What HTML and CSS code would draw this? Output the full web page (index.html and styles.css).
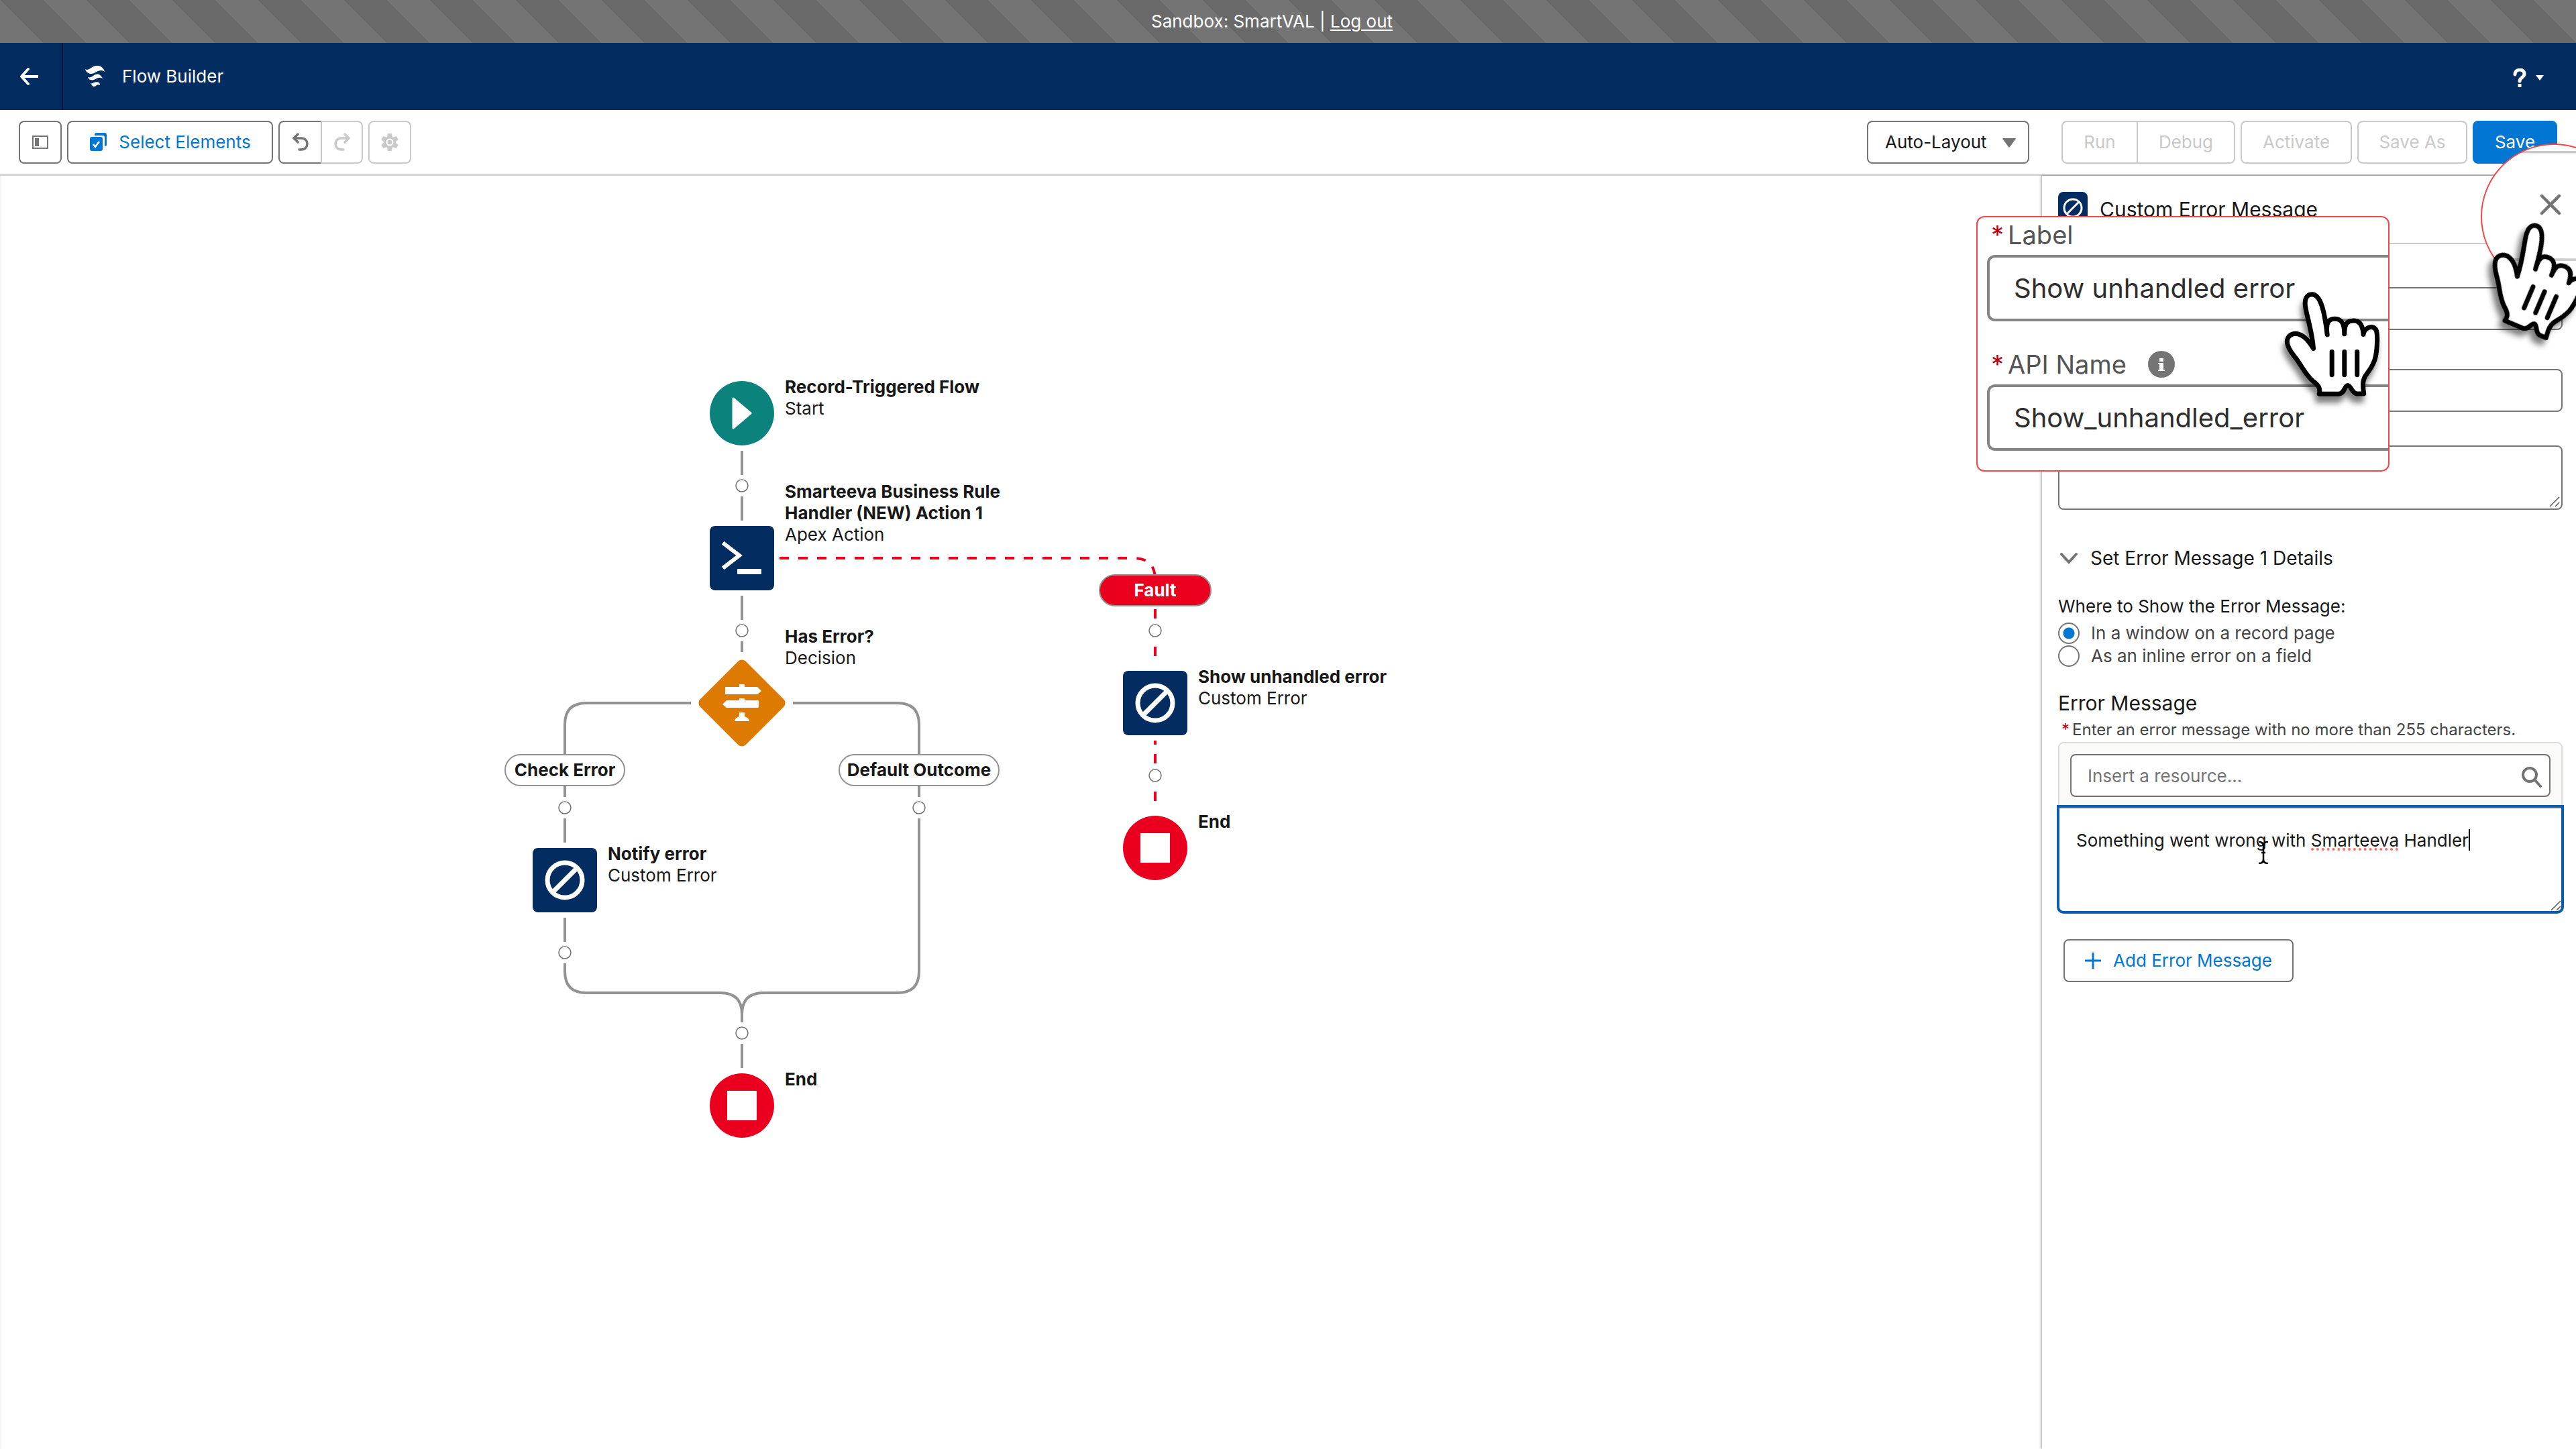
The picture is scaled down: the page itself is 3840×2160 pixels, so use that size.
FILE: index.html
```html
<!DOCTYPE html>
<html lang="en">
<head>
<meta charset="utf-8">
<title>Flow Builder</title>
<link rel="stylesheet" href="styles.css">
</head>
<body>
<div class="app">
  <div class="sandbox-bar"><span>Sandbox: SmartVAL | <a href="#logout">Log out</a></span></div>

  <header class="app-header">
    <button class="back" aria-label="Back">
      <svg width="32" height="28" viewBox="0 0 32 28" fill="none" stroke="#fff" stroke-width="4" stroke-linecap="round" stroke-linejoin="round"><path d="M14 3 4 14l10 11"/><path d="M4 14h25" stroke-linecap="butt"/></svg>
    </button>
    <div class="brand">
      <svg width="32" height="32" viewBox="0 0 32 32" fill="#fff"><path d="M1 5c2 2 5 1 9-2 6-4 11-4 14-2 3 2 5 4 6 8-4-3-8-2-12 0-5 3-9 4-12 2-3-1-4-3-5-6z"/><path d="M5 17c3 1 5 0 8-2 4-3 8-3 10-1 2 1 3 3 4 5-3-2-6-1-9 0-4 2-6 3-9 2-2 0-3-2-4-4z"/><path d="M9 26c2 1 3 0 5-1 3-1 5-1 8 0l1 4c-3-1-4-1-6 1s-5 1-6-1z"/></svg>
      <span>Flow Builder</span>
    </div>
    <button class="help" aria-label="Help">
      <svg width="20" height="28" viewBox="0 0 20 28" fill="none" stroke="#fff" stroke-width="5"><path d="M3 9c0-9 14-9 14-1 0 6-7 5-7 11" stroke-linecap="round"/><path d="M10 23v5"/></svg>
      <svg width="12" height="8" viewBox="0 0 12 8" fill="#fff"><path d="M0 0h12L6 8z"/></svg>
    </button>
  </header>

  <div class="toolbar">
    <button class="btn icon-btn" aria-label="Toggle toolbox">
      <svg width="24" height="20" viewBox="0 0 24 20"><path fill="none" stroke="#747474" stroke-width="2" d="M1 1h22v18H1z"/><path fill="#747474" d="M4 4h6v12H4z"/></svg>
    </button>
    <button class="btn select-btn">
      <svg width="28" height="28" viewBox="0 0 28 28"><path fill="#0176d3" d="M8 4V3c0-2 1-3 3-3h12c2 0 3 1 3 3v15c0 1-1 2-3 2V7c0-2-1-3-3-3z"/><rect x="1" y="6" width="19" height="21" rx="3" fill="#0176d3"/><path d="m6 17 3 4 6-8" fill="none" stroke="#fff" stroke-width="2.500"/></svg>
      <span>Select Elements</span>
    </button>
    <div class="btn-group">
      <button class="btn icon-btn" aria-label="Undo">
        <svg width="26" height="28" viewBox="0 0 26 28" fill="none" stroke="#747474" stroke-width="3.500" stroke-linecap="round"><path d="M9 2 3 8l6 6M3 8h11c12 0 12 17 0 17h-3"/></svg>
      </button>
      <button class="btn icon-btn" aria-label="Redo" disabled>
        <svg width="26" height="28" viewBox="0 0 26 28" fill="none" stroke="#c9c9c9" stroke-width="3.500" stroke-linecap="round"><path d="m17 2 6 6-6 6M23 8H12C0 8 0 25 12 25h3"/></svg>
      </button>
    </div>
    <button class="btn icon-btn" aria-label="Settings" disabled>
      <svg width="26" height="28" viewBox="-13 -14 26 28"><g fill="#c9c9c9"><circle r="9"/><path id="tooth" d="M-3-13h6l1 6h-8z"/><use href="#tooth" transform="rotate(60)"/><use href="#tooth" transform="rotate(120)"/><use href="#tooth" transform="rotate(180)"/><use href="#tooth" transform="rotate(240)"/><use href="#tooth" transform="rotate(300)"/></g><circle r="4.500" fill="#c9c9c9" stroke="#fff" stroke-width="2"/></svg>
    </button>
    <div class="layout-select">
      <select class="btn" aria-label="Layout mode"><option>Auto-Layout</option></select>
      <svg width="20" height="14" viewBox="0 0 20 14" fill="#747474"><path d="M1 0h18q2 0 0 2l-8 11q-1 1-2 0L1 2q-2-2 0-2z"/></svg>
    </div>
    <div class="btn-group">
      <button class="btn run" disabled>Run</button>
      <button class="btn debug" disabled>Debug</button>
    </div>
    <button class="btn activate" disabled>Activate</button>
    <button class="btn save-as" disabled>Save As</button>
    <button class="btn save">Save</button>
  </div>

  <div class="workspace">
    <main class="canvas">
      <svg class="lines" width="2000" height="1500" viewBox="0 262 2000 1500" fill="none">
        <g stroke="#939393" stroke-width="4">
          <path d="M1106 672v36M1106 740v36M1106 888v36M1106 956v16"/>
          <path d="M1030 1048H874q-32 0-32 32v108M1182 1048h156q32 0 32 32v108"/>
          <path d="M842 1220v36M842 1368v36M842 1436v12q0 32 32 32h200q32 0 32 32v12M1370 1220v228q0 32-32 32h-200q-32 0-32 32M1106 1556v36"/>
        </g>
        <path stroke="#ea001e" stroke-width="4" stroke-dasharray="14 14" d="M1162 832h528q32 0 32 32"/>
        <path stroke="#ea001e" stroke-width="4" d="M1722 908v14M1722 964v14M1722 1104v6M1722 1124v14M1722 1180v14"/>
        <g stroke="#747474" stroke-width="1.500" fill="#fff">
          <circle cx="1106" cy="724" r="9"/><circle cx="1106" cy="940" r="9"/><circle cx="842" cy="1204" r="9"/><circle cx="1370" cy="1204" r="9"/><circle cx="842" cy="1420" r="9"/><circle cx="1106" cy="1540" r="9"/><circle cx="1722" cy="940" r="9"/><circle cx="1722" cy="1156" r="9"/>
        </g>
      </svg>

      <div class="node start">
        <svg class="glyph" viewBox="0 0 96 96"><circle cx="48" cy="48" r="48" fill="#0b827c"/><path d="M35 26l26 22-26 22z" fill="#fff" stroke="#fff" stroke-width="3" stroke-linejoin="round"/></svg>
        <div class="caption"><b>Record-Triggered Flow</b><span>Start</span></div>
      </div>
      <div class="node apex">
        <svg class="glyph" viewBox="0 0 96 96"><rect width="96" height="96" rx="8" fill="#032d60"/><path d="M22 27l22 17-22 17" fill="none" stroke="#fff" stroke-width="6" stroke-linecap="square"/><rect x="41" y="64" width="36" height="8" rx="1" fill="#fff"/></svg>
        <div class="caption tall"><b>Smarteeva Business Rule Handler (NEW) Action 1</b><span>Apex Action</span></div>
      </div>
      <div class="node decision">
        <svg class="glyph diamond" viewBox="0 0 132 132"><rect x="18" y="18" width="96" height="96" rx="8" fill="#dd7a01" transform="rotate(45 66 66)"/><g fill="#fff"><path d="M42 42h20v-3q0-1 1-1h6q1 0 1 1v3h19l6 6-6 5H42q-1 0-1-2v-7q0-2 1-2z"/><path d="M90 62H70v-2q0-1-1-1h-6q-1 0-1 1v2H43l-6 6 6 5h47q1 0 1-2v-7q0-2-1-2z"/><path d="M63 80h6q1 0 1 1v5q6 2 7 6 0 1-1 1H56q-1 0-1-1 1-4 7-6v-5q0-1 1-1z"/></g></svg>
        <div class="caption"><b>Has Error?</b><span>Decision</span></div>
      </div>
      <div class="node notify">
        <svg class="glyph" viewBox="0 0 96 96"><rect width="96" height="96" rx="8" fill="#032d60"/><circle cx="48" cy="48" r="26" fill="none" stroke="#fff" stroke-width="7"/><path d="M30 66l36-36" stroke="#fff" stroke-width="7"/></svg>
        <div class="caption"><b>Notify error</b><span>Custom Error</span></div>
      </div>
      <div class="node unhandled">
        <svg class="glyph" viewBox="0 0 96 96"><rect width="96" height="96" rx="8" fill="#032d60"/><circle cx="48" cy="48" r="26" fill="none" stroke="#fff" stroke-width="7"/><path d="M30 66l36-36" stroke="#fff" stroke-width="7"/></svg>
        <div class="caption"><b>Show unhandled error</b><span>Custom Error</span></div>
      </div>
      <div class="node end-main">
        <svg class="glyph" viewBox="0 0 96 96"><circle cx="48" cy="48" r="48" fill="#ea001e"/><path d="M26 26h44v44H26z" fill="#fff"/></svg>
        <div class="caption"><b>End</b></div>
      </div>
      <div class="node end-fault">
        <svg class="glyph" viewBox="0 0 96 96"><circle cx="48" cy="48" r="48" fill="#ea001e"/><path d="M26 26h44v44H26z" fill="#fff"/></svg>
        <div class="caption"><b>End</b></div>
      </div>
      <span class="pill check">Check Error</span>
      <span class="pill default">Default Outcome</span>
      <span class="pill fault">Fault</span>
    </main>

    <aside class="panel">
      <div class="panel-header">
        <svg width="44" height="44" viewBox="0 0 44 44"><rect width="44" height="44" rx="8" fill="#032d60"/><circle cx="22" cy="24" r="13" fill="none" stroke="#fff" stroke-width="3"/><path d="M13 33l18-18" stroke="#fff" stroke-width="3"/></svg>
        <h2>Custom Error Message</h2>
      </div>
      <form class="panel-form">
        <div class="field"><input class="control" type="text" aria-label="Label"></div>
        <div class="field"><input class="control" type="text" aria-label="API Name"></div>
        <div class="field description">
          <textarea class="control" aria-label="Description"></textarea>
          <svg class="grip" width="16" height="16" viewBox="0 0 16 16" stroke="#555" stroke-width="1.500"><path d="M1 15 15 1M9 15l6-6"/></svg>
        </div>

        <button type="button" class="section-toggle">
          <svg width="28" height="18" viewBox="0 0 28 18" fill="none" stroke="#747474" stroke-width="4" stroke-linecap="round"><path d="M3 3l11 12L25 3"/></svg>
          <span>Set Error Message 1 Details</span>
        </button>

        <fieldset>
          <legend>Where to Show the Error Message:</legend>
          <label class="radio"><input type="radio" name="where" checked><span>In a window on a record page</span></label>
          <label class="radio"><input type="radio" name="where"><span>As an inline error on a field</span></label>
        </fieldset>

        <h3>Error Message</h3>
        <label class="hint" for="f-message"><span class="star">*</span>Enter an error message with no more than 255 characters.</label>
        <div class="resource">
          <input class="control" type="text" placeholder="Insert a resource..." aria-label="Insert a resource">
          <svg width="32" height="32" viewBox="0 0 32 32" fill="none" stroke="#747474" stroke-width="4"><circle cx="13" cy="13" r="10"/><path d="M20 20l9 10" stroke-linecap="round"/></svg>
        </div>
        <div class="message">
          <textarea id="f-message" spellcheck="false">Something went wrong with Smarteeva Handler</textarea>
          <i class="squiggle"></i><i class="caret"></i>
          <svg class="ibeam" width="16" height="34" viewBox="0 0 16 34" fill="none" stroke="#000" stroke-width="2.500"><path d="M1 1q7 0 7 6v20q0 6-7 6M15 1q-7 0-7 6M8 27q0 6 7 6M5 17h6"/></svg>
          <svg class="grip" width="16" height="16" viewBox="0 0 16 16" stroke="#555" stroke-width="1.500"><path d="M1 15 15 1M9 15l6-6"/></svg>
        </div>
        <button type="button" class="btn add-btn">
          <svg width="24" height="24" viewBox="0 0 24 24" stroke="#0176d3" stroke-width="3"><path d="M12 0v24M0 12h24"/></svg>
          <span>Add Error Message</span>
        </button>
      </form>

      <div class="lens-circle">
        <button class="close" aria-label="Close">
          <svg width="32" height="32" viewBox="0 0 32 32" stroke="#747474" stroke-width="4.500" stroke-linecap="round"><path d="M3 3l26 26M29 3L3 29"/></svg>
        </button>
      </div>
      <div class="lens">
        <label for="z-label"><span class="star">*</span>Label</label>
        <input id="z-label" type="text" value="Show unhandled error">
        <label for="z-api"><span class="star">*</span>API Name
          <svg width="40" height="40" viewBox="0 0 40 40"><circle cx="20" cy="20" r="20" fill="#747474"/><path fill="#fff" d="M17 11h6v5h-6zM15 18h8v10h2v2H15v-2h2v-8h-2z"/></svg>
        </label>
        <input id="z-api" type="text" value="Show_unhandled_error">
      </div>
      <svg class="hand" viewBox="60 90 460 530"><use href="#hand-shape"/></svg>
      <svg class="hand tilted" viewBox="60 90 460 530">
        <g id="hand-shape" stroke="#000" stroke-width="21" stroke-linejoin="round" stroke-linecap="round">
          <path fill="#fff" d="M206 358C199 270 169 190 169 160C167 125 185 115 200 115C240 115 257 200 268 296C260 240 275 225 302 225C335 225 345 250 345 293C345 250 355 232 388 233C418 234 428 262 430 295C434 272 450 262 468 262C490 265 492 285 492 320C490 400 480 425 445 472C422 500 428 530 432 561H400C378 558 374 523 360 523C345 523 346 562 318 562H232C240 535 225 520 205 505C165 470 158 440 122 395C100 367 88 345 88 328C88 300 112 291 128 291C165 295 188 330 206 358Z"/>
          <path fill="none" d="M289 373v103M345 373v103M402 373v103"/>
        </g>
      </svg>
    </aside>
  </div>
</div>
</body>
</html>
```

FILE: styles.css
```css
* { box-sizing: border-box; }

body {
  margin: 0;
  font-family: Inter, "Liberation Sans", sans-serif;
  font-size: 26px;
  line-height: 32px;
  color: #181818;
  background: #fff;
}

button, input, select, textarea { font: inherit; color: inherit; margin: 0; }
button { padding: 0; border: 0; background: none; }
h2, h3 { margin: 0; font-weight: 400; }
svg { display: block; flex: none; }

.app {
  position: relative;
  display: flex;
  flex-direction: column;
  min-height: 100vh;
  overflow: hidden;
}

/* Top bars */
.sandbox-bar {
  display: flex;
  align-items: center;
  justify-content: center;
  height: 64px;
  padding-right: 48px;
  color: #fff;
  background: linear-gradient(45deg, #696969 25%, #747474 25% 50%, #696969 50% 75%, #747474 75%) 0 0 / 128px 128px;
}
.sandbox-bar a { color: inherit; text-underline-offset: 3px; text-decoration-thickness: 2px; }

.app-header {
  display: flex;
  align-items: stretch;
  height: 100px;
  color: #fff;
  background: #032d60;
}
.back {
  display: grid;
  place-items: center;
  width: 94px;
  padding-right: 4px;
  border-right: 2px solid #001639;
}
.brand { display: flex; align-items: center; gap: 24px; padding-left: 32px; }
.help { display: flex; align-items: center; gap: 14px; margin-left: auto; padding: 4px 48px 0 0; }

.toolbar {
  display: flex;
  align-items: center;
  gap: 8px;
  height: 98px;
  padding: 0 28px;
  border-bottom: 2px solid #c9c9c9;
}
.btn {
  display: flex;
  align-items: center;
  justify-content: center;
  height: 64px;
  border: 2px solid #747474;
  border-radius: 8px;
  background: #fff;
}
.btn:disabled { color: #c9c9c9; border-color: #c9c9c9; }
.icon-btn { width: 64px; }
.select-btn { width: 307px; gap: 16px; color: #0176d3; }
.btn-group { display: flex; }
.btn-group .icon-btn { width: 63px; }
.btn-group .btn:first-child { border-right-width: 0; border-radius: 8px 0 0 8px; }
.btn-group .btn:last-child { border-radius: 0 8px 8px 0; }
.layout-select { position: relative; margin-left: auto; margin-right: 40px; }
.layout-select select { width: 242px; padding-left: 25px; appearance: none; }
.layout-select svg { position: absolute; right: 20px; top: 26px; pointer-events: none; }
.run { width: 112px; }
.debug { width: 147px; }
.activate { width: 166px; }
.save-as { width: 164px; }
.save { width: 126px; color: #fff; border-color: #0176d3; background: #0176d3; }

/* Flow canvas */
.workspace { display: flex; flex: 1; }
.canvas { position: relative; flex: 1; min-width: 0; border-left: 2px solid #f3f3f3; }
.lines { position: absolute; left: -2px; top: 0; }
.node { position: absolute; display: flex; gap: 16px; }
.glyph { width: 96px; height: 96px; }
.diamond { width: 132px; height: 132px; margin: -18px; }
.caption { display: flex; flex-direction: column; width: 360px; margin-top: -7px; }
.caption.tall { margin-top: -67px; }
.start { left: 1056px; top: 306px; }
.apex { left: 1056px; top: 522px; }
.decision { left: 1056px; top: 738px; }
.decision .caption { margin-top: -67px; }
.notify { left: 792px; top: 1002px; }
.unhandled { left: 1672px; top: 738px; }
.end-main { left: 1056px; top: 1338px; }
.end-fault { left: 1672px; top: 954px; }
.pill {
  position: absolute;
  display: grid;
  place-items: center;
  height: 48px;
  border: 2px solid #939393;
  border-radius: 24px;
  font-weight: 700;
  background: #fff;
}
.check { left: 750px; top: 862px; width: 180px; }
.default { left: 1248px; top: 862px; width: 240px; }
.fault { left: 1636px; top: 594px; width: 168px; color: #fff; background: #ea001e; }

/* Properties panel */
.panel { position: relative; width: 796px; box-shadow: -1px 0 4px rgba(0, 0, 0, .4); clip-path: inset(-48px 0 0 -120px); }
.panel-header {
  display: flex;
  align-items: center;
  gap: 18px;
  height: 102px;
  padding: 0 24px 8px;
  border-bottom: 2px solid #c9c9c9;
}
.panel-header h2 { padding-top: 8px; font-size: 30px; line-height: 40px; }
.panel-form { display: flex; flex-direction: column; padding: 6px 20px 0 24px; }
.field { position: relative; margin-top: 58px; }
.field.description { margin-top: 50px; }
.control {
  display: block;
  width: 100%;
  height: 64px;
  padding: 0 24px;
  border: 2px solid #747474;
  border-radius: 8px;
  background: #fff;
}
textarea { resize: none; }
.description .control { height: 96px; }
.grip { position: absolute; right: 4px; bottom: 4px; }

.section-toggle { display: flex; align-items: center; gap: 18px; height: 40px; margin-top: 52px; padding-left: 2px; font-size: 28px; }
fieldset { display: flex; flex-direction: column; gap: 2px; margin: 36px 0 0; padding: 0; border: 0; }
legend { padding: 0; margin-bottom: 8px; }
.radio { display: flex; align-items: center; gap: 17px; color: #444; }
.radio input {
  appearance: none;
  width: 32px;
  height: 32px;
  border: 2px solid #747474;
  border-radius: 50%;
  background: #fff;
}
.radio input:checked { background: radial-gradient(circle, #0176d3 8px, #fff 9px); }
h3 { margin-top: 34px; font-size: 30px; line-height: 40px; }
.hint { margin-top: 4px; padding-left: 5px; font-size: 24px; color: #444; }
.star { color: #ba0517; }
.hint .star { margin-right: 4px; }
.resource {
  position: relative;
  margin-top: 2px;
  padding: 16px 16px 14px;
  border: 2px solid #ddd;
  border-radius: 8px 8px 0 0;
  background: #fafaf9;
}
.resource svg { position: absolute; right: 28px; top: 34px; }
.resource ::placeholder { color: #747474; opacity: 1; }
.message { position: relative; margin: -4px -2px 0; }
.message textarea {
  display: block;
  width: 100%;
  height: 162px;
  padding: 33px 25px;
  border: 4px solid #0b5cab;
  border-radius: 0 0 10px 10px;
  box-shadow: inset 0 2px #ddd;
  outline: 0;
}
.squiggle { position: absolute; left: 379px; top: 64px; width: 130px; border-top: 4px dotted #ff6b6b; }
.caret { position: absolute; left: 614px; top: 36px; width: 2px; height: 32px; background: #000; }
.ibeam { position: absolute; left: 300px; top: 54px; }
.add-btn { width: 343px; gap: 18px; margin: 38px 0 0 8px; color: #0176d3; }

/* Magnified call-outs over the panel */
.lens {
  position: absolute;
  left: -98px;
  top: 60px;
  width: 616px;
  height: 381px;
  padding: 2px 0 0 14px;
  overflow: hidden;
  border: 2px solid #f04848;
  border-radius: 12px;
  background: #fff;
}
.lens label { display: flex; align-items: center; height: 48px; margin-bottom: 6px; padding-left: 6px; font-size: 38px; line-height: 48px; color: #555; }
.lens .star { margin-right: 6px; }
.lens label svg { margin-left: 32px; }
.lens input {
  display: block;
  width: 100%;
  height: 99px;
  padding: 0 0 0 36px;
  border: 4px solid #848484;
  border-right: 0;
  border-radius: 12px 0 0 12px;
  font-size: 40px;
  line-height: 48px;
  color: #2e2e2e;
}
.lens input + label { margin-top: 40px; }
.lens-circle {
  position: absolute;
  left: 654px;
  top: -48px;
  width: 218px;
  height: 218px;
  border: 2px solid #f04848;
  border-radius: 50%;
  background: linear-gradient(transparent 9px, #c9c9c9 9px 12px, #eee 12px 14px, transparent 14px 169px, #d0d0d0 169px 173px, transparent 173px) #fff;
}
.close { display: block; margin: 73px 0 0 86px; }
.hand {
  position: absolute;
  left: 356px;
  top: 168px;
  width: 153px;
  height: 177px;
  overflow: visible;
  filter: drop-shadow(-3px 10px 4px rgba(0, 0, 0, .5));
}
.hand.tilted { left: 656px; top: 71px; transform: rotate(23deg); transform-origin: 76px 94px; }
```
